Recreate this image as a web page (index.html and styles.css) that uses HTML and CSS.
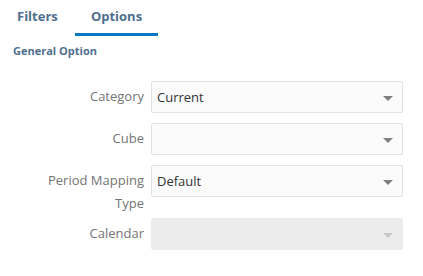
FILE: index.html
```html
<!DOCTYPE html>
<html>
<head>
<meta charset="utf-8">
<link rel="stylesheet" href="styles.css">
</head>
<body>
<div class="tabs">
  <div class="tab">Filters</div>
  <div class="tab active">Options</div>
</div>
<div class="section-title">General Option</div>
<div class="form">
  <div class="row">
    <div class="label">Category</div>
    <div class="select"><span class="value">Current</span><span class="arrow"></span></div>
  </div>
  <div class="row">
    <div class="label">Cube</div>
    <div class="select"><span class="value"></span><span class="arrow"></span></div>
  </div>
  <div class="row">
    <div class="label">Period Mapping Type</div>
    <div class="select"><span class="value">Default</span><span class="arrow"></span></div>
  </div>
  <div class="row">
    <div class="label">Calendar</div>
    <div class="select disabled"><span class="value"></span><span class="arrow"></span></div>
  </div>
</div>
</body>
</html>
```

FILE: styles.css
```css
* { box-sizing: border-box; }
body {
  margin: 0;
  background: #fff;
  font-family: "Open Sans", "Noto Sans", sans-serif;
  width: 423px;
  height: 276px;
  overflow: hidden;
}
.tabs {
  display: flex;
  padding-left: 0;
  height: 36px;
}
.tab {
  font-size: 13px;
  font-weight: 700;
  color: #4e6e8e;
  padding: 6px 15px 0 17px;
  width: 75px;
  line-height: 21px;
}
.tab.active {
  width: 83px;
  text-align: center;
  padding: 6px 0 0 0;
  border-bottom: 3px solid #0a76c6;
  height: 36px;
}
.section-title {
  font-size: 11px;
  font-weight: 700;
  color: #4e6e8e;
  padding-left: 13px;
  margin-top: 7px;
  line-height: 16px;
}
.form {
  margin-top: 22px;
  display: flex;
  flex-direction: column;
}
.row {
  display: flex;
  align-items: flex-start;
  margin-bottom: 10px;
}
.row:nth-child(3) { margin-bottom: 3px; }
.label {
  width: 151px;
  padding: 4px 7px 0 38px;
  text-align: right;
  font-size: 13px;
  line-height: 23px;
  color: #747474;
}
.select {
  width: 252px;
  height: 32px;
  border: 1px solid #e2e2e2;
  border-radius: 2px;
  background: #fbfbfb;
  display: flex;
  align-items: center;
  padding: 0 9px 0 5px;
}
.value {
  flex: 1;
  font-size: 13px;
  color: #333;
}
.arrow {
  width: 0;
  height: 0;
  border-left: 5px solid transparent;
  border-right: 5px solid transparent;
  border-top: 5px solid #808080;
  margin-top: 2px;
}
.select.disabled {
  background: #ececec;
  border-color: #ececec;
}
.select.disabled .arrow {
  border-top-color: #c9c9c9;
}
```
